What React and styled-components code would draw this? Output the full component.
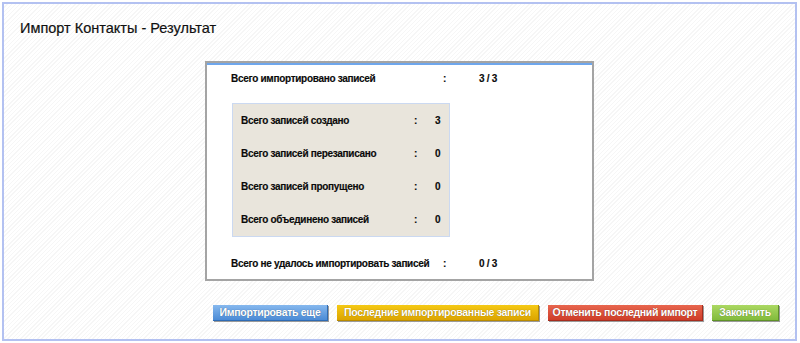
import React from "react";
import styled, { createGlobalStyle } from "styled-components";

const Global = createGlobalStyle`
  html, body { margin: 0; padding: 0; background: #fff; }
  body { font-family: "Liberation Sans", Arial, sans-serif; }
`;

const Frame = styled.div`
  box-sizing: border-box;
  margin: 2px 0 0 2px;
  width: 795px;
  height: 339px;
  border: 2px solid #b3c1f1;
  background: repeating-linear-gradient(135deg, #ffffff 0 2px, #f6f6f6 2px 3px);
  display: flex;
  flex-direction: column;
`;

const Title = styled.h1`
  margin: 16px 0 0 16px;
  font-size: 14.5px;
  line-height: 16px;
  font-weight: normal;
  color: #111;
  -webkit-text-stroke: 0.2px #111;
`;

const ResultBox = styled.div`
  box-sizing: border-box;
  align-self: center;
  margin-top: 25px;
  width: 389px;
  height: 220px;
  background: #fff;
  border: 2px solid #a4a4a4;
  box-shadow: inset 0 2px 0 #6ea6ec;
  padding: 5px 0 0 24px;
`;

const Row = styled.div`
  display: grid;
  grid-template-columns: ${(p) => p.$cols};
  align-items: center;
  height: ${(p) => p.$h}px;
  font-size: 10px;
  letter-spacing: -0.3px;
  font-weight: bold;
  color: #0a0a0a;
  -webkit-text-stroke: 0.15px #0a0a0a;
  margin-top: ${(p) => p.$mt || 0}px;
`;

const Stats = styled.div`
  box-sizing: border-box;
  margin: 15px 0 0 1px;
  width: 218px;
  height: 134px;
  background: #e9e5dc;
  border: 1px solid #cbd9f1;
  padding-left: 8px;
`;

const Buttons = styled.div`
  display: flex;
  justify-content: flex-end;
  gap: 9px;
  margin-top: 24px;
  padding-right: 16px;
`;

const palettes = {
  blue: ["#86b8ee", "#4b8bd6", "#2f6bb3"],
  yellow: ["#f5c915", "#dca500", "#b88a00"],
  red: ["#e8664e", "#cf3d29", "#a52d1e"],
  green: ["#abd862", "#82bb3c", "#5f9128"],
};

const Button = styled.button`
  box-sizing: border-box;
  height: 16px;
  width: ${(p) => p.$w}px;
  padding: 0;
  border: none;
  border-bottom: 1px solid ${(p) => palettes[p.$c][2]};
  border-right: 1px solid ${(p) => palettes[p.$c][2]};
  box-shadow: 1px 1px 0 #9a9a9a;
  background: linear-gradient(${(p) => palettes[p.$c][0]}, ${(p) => palettes[p.$c][1]});
  color: #fff;
  font-family: "Liberation Sans", Arial, sans-serif;
  font-size: 10.5px;
  letter-spacing: -0.3px;
  font-weight: bold;
  line-height: 15px;
  text-shadow: 0 0 1px rgba(0, 0, 0, 0.45);
  white-space: nowrap;
  cursor: pointer;
`;

const topCols = "212px 36px auto";
const innerCols = "173px 21px auto";

export default function App() {
  return (
    <>
      <Global />
      <Frame>
        <Title>Импорт Контакты - Результат</Title>
        <ResultBox>
          <Row $cols={topCols} $h={20}>
            <span>Всего импортировано записей</span>
            <span>:</span>
            <span>3 / 3</span>
          </Row>
          <Stats>
            {[
              ["Всего записей создано", "3"],
              ["Всего записей перезаписано", "0"],
              ["Всего записей пропущено", "0"],
              ["Всего объединено записей", "0"],
            ].map(([l, v]) => (
              <Row key={l} $cols={innerCols} $h={33}>
                <span>{l}</span>
                <span>:</span>
                <span>{v}</span>
              </Row>
            ))}
          </Stats>
          <Row $cols={topCols} $h={20} $mt={16}>
            <span>Всего не удалось импортировать записей</span>
            <span>:</span>
            <span>0 / 3</span>
          </Row>
        </ResultBox>
        <Buttons>
          <Button $c="blue" $w={115}>Импортировать еще</Button>
          <Button $c="yellow" $w={202}>Последние импортированные записи</Button>
          <Button $c="red" $w={155}>Отменить последний импорт</Button>
          <Button $c="green" $w={67}>Закончить</Button>
        </Buttons>
      </Frame>
    </>
  );
}
